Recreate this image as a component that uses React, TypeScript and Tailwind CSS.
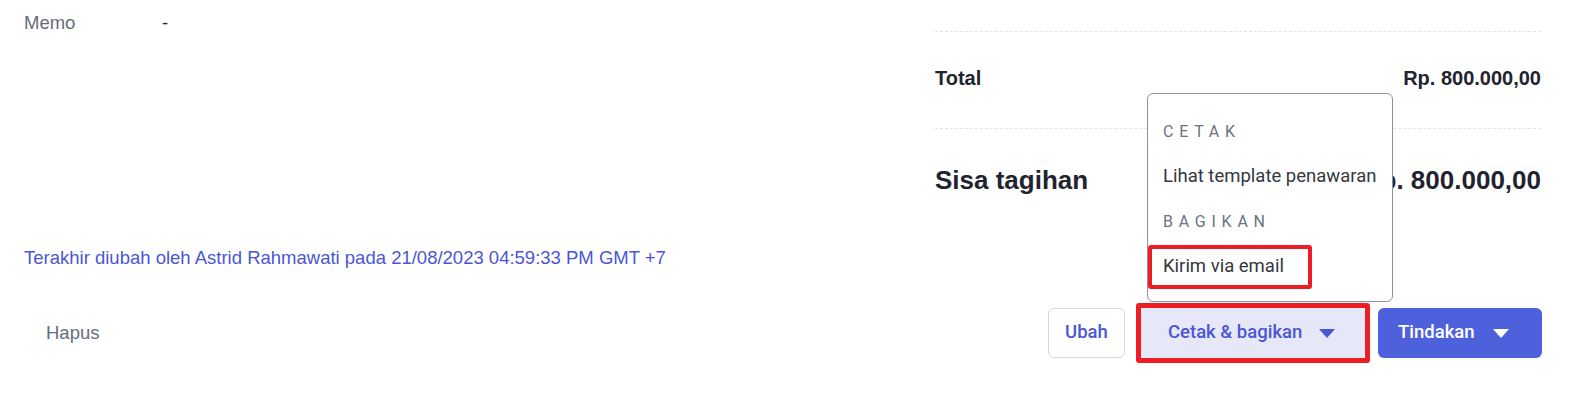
import React from "react";

function Caret({ className }: { className: string }) {
  return (
    <svg width="16" height="9" viewBox="0 0 16 9" className={className}>
      <path d="M0 0 L16 0 L8 9 Z" fill="currentColor" />
    </svg>
  );
}

export default function App() {
  return (
    <div className="relative w-[1596px] h-[406px] bg-white font-['Liberation_Sans',Arial,sans-serif] text-[18.5px] overflow-hidden">
      <div className="flex items-start">
        <div className="flex-1 pl-6 pt-[12px] flex leading-[22px]">
          <div className="w-[138px] text-[#666d78]">Memo</div>
          <div className="text-[#1f2430]">-</div>
        </div>
        <div className="w-[606px] mr-[55px] pt-[31px]">
          <div className="border-t border-dashed border-[#e3e5e9]" />
          <div className="flex justify-between items-center h-[96px] pb-[4px] text-[20px] font-bold text-[#1f2430]">
            <span>Total</span>
            <span>Rp. 800.000,00</span>
          </div>
          <div className="border-t border-dashed border-[#e3e5e9]" />
          <div className="flex justify-between items-center h-[102px] text-[26px] font-bold text-[#1f2430]">
            <span>Sisa tagihan</span>
            <span>Rp. 800.000,00</span>
          </div>
        </div>
      </div>

      <div className="mt-[16px] pl-6 leading-[22px] text-[#4b56d6]">
        Terakhir diubah oleh Astrid Rahmawati pada 21/08/2023 04:59:33 PM GMT +7
      </div>

      <div className="mt-[39px] flex items-center justify-between pl-6 pr-[54px]">
        <button className="px-[22px] h-[50px] text-[#666d78] leading-[22px]">Hapus</button>
        <div className="flex items-center font-['Roboto',sans-serif] font-medium">
          <button className="h-[50px] w-[77px] rounded-md border border-[#d6d9de] bg-white text-[#4b56d6]">
            Ubah
          </button>
          <button className="ml-[15px] h-[50px] w-[226px] rounded-md bg-[#e6e8f8] text-[#4b56d6] flex items-center pl-[28px]">
            <span>Cetak &amp; bagikan</span>
            <Caret className="ml-[17px]" />
          </button>
          <button className="ml-[12px] h-[50px] w-[164px] rounded-md bg-[#4e61dc] text-white flex items-center pl-[20px]">
            <span>Tindakan</span>
            <Caret className="ml-[18px]" />
          </button>
        </div>
      </div>

      {/* Dropdown menu */}
      <div className="absolute left-[1147px] top-[93px] w-[246px] h-[209px] rounded-md border border-[#8b91a1] bg-white pt-[15px] font-['Roboto',sans-serif]">
        <div className="h-[45px] flex items-center pl-[15px] text-[16px] tracking-[0.36em] text-[#6b7280]">
          CETAK
        </div>
        <div className="h-[45px] flex items-center pl-[15px] text-[#333840]">
          Lihat template penawaran
        </div>
        <div className="h-[45px] flex items-center pl-[15px] text-[16px] tracking-[0.36em] text-[#6b7280]">
          BAGIKAN
        </div>
        <div className="h-[45px] flex items-center pl-[15px] text-[#333840]">
          Kirim via email
        </div>
      </div>

      {/* Annotation boxes */}
      <div className="absolute left-[1148px] top-[245px] w-[164px] h-[44px] border-[4px] border-[#ee1c25] rounded-[3px]" />
      <div className="absolute left-[1136px] top-[303px] w-[234px] h-[60px] border-[5px] border-[#ee1c25] rounded-[3px]" />
    </div>
  );
}
